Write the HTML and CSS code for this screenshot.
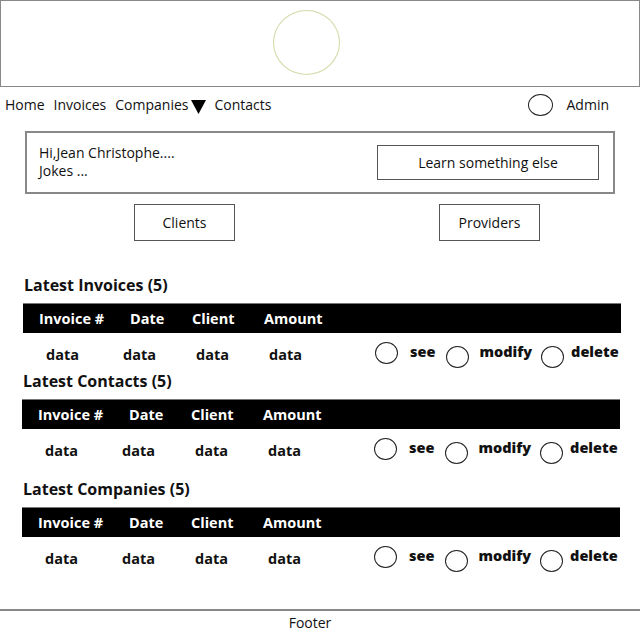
FILE: index.html
```html
<!DOCTYPE html>
<html lang="en">
<head>
    <meta charset="UTF-8">
    <meta name="viewport" content="width=device-width, initial-scale=1.0">
    <title>Dashboard</title>
    <link rel="stylesheet" href="styles.css">
</head>
<body>
    <header class="top">
        <div class="logo"></div>
    </header>

    <nav class="menu">
        <div class="links">
            <a href="#">Home</a>
            <a href="#">Invoices</a>
            <a href="#" class="dropdown">Companies
                <svg width="15" height="14" viewBox="0 0 15 14"><polygon points="0,0 15,0 7.5,14" fill="#000"/></svg>
            </a>
            <a href="#">Contacts</a>
        </div>
        <div class="user">
            <span class="avatar"></span>
            <span>Admin</span>
        </div>
    </nav>

    <div class="welcome">
        <p>Hi,Jean Christophe....<br>Jokes ...</p>
        <button class="box-btn wide">Learn something else</button>
    </div>

    <div class="choices">
        <button class="box-btn">Clients</button>
        <button class="box-btn">Providers</button>
    </div>

    <section class="latest first">
        <h2>Latest Invoices (5)</h2>
        <div class="head"><span>Invoice #</span><span>Date</span><span>Client</span><span>Amount</span></div>
        <div class="row">
            <span>data</span><span>data</span><span>data</span><span>data</span>
            <div class="actions">
                <i class="dot"></i><b>see</b><i class="dot low"></i><b>modify</b><i class="dot low end"></i><b>delete</b>
            </div>
        </div>
    </section>

    <section class="latest">
        <h2>Latest Contacts (5)</h2>
        <div class="head"><span>Invoice #</span><span>Date</span><span>Client</span><span>Amount</span></div>
        <div class="row">
            <span>data</span><span>data</span><span>data</span><span>data</span>
            <div class="actions">
                <i class="dot"></i><b>see</b><i class="dot low"></i><b>modify</b><i class="dot low end"></i><b>delete</b>
            </div>
        </div>
    </section>

    <section class="latest last">
        <h2>Latest Companies (5)</h2>
        <div class="head"><span>Invoice #</span><span>Date</span><span>Client</span><span>Amount</span></div>
        <div class="row">
            <span>data</span><span>data</span><span>data</span><span>data</span>
            <div class="actions">
                <i class="dot"></i><b>see</b><i class="dot low"></i><b>modify</b><i class="dot low end"></i><b>delete</b>
            </div>
        </div>
    </section>

    <footer class="bottom">Footer</footer>
</body>
</html>
```

FILE: styles.css
```css
body {
    font-family: 'Open Sans', 'Liberation Sans', sans-serif;
    font-size: 14px;
    color: #111;
    background-color: #fff;
    margin: 0;
    width: 640px;
    height: 640px;
    position: relative;
    overflow: hidden;
}

.top {
    box-sizing: border-box;
    height: 87px;
    border: 1px solid #888;
    display: flex;
    justify-content: center;
    align-items: center;
    padding-right: 28px;
}

.logo {
    width: 65px;
    height: 63px;
    border: 1px solid #d4d8a6;
    border-radius: 50%;
    margin-top: -2px;
}

.menu {
    height: 38px;
    display: flex;
    justify-content: space-between;
    align-items: center;
    padding: 0 31px 4px 5px;
    box-sizing: border-box;
}

.links {
    display: flex;
    align-items: center;
    gap: 9px;
}

.menu a {
    color: #111;
    text-decoration: none;
}

.dropdown {
    display: flex;
    align-items: center;
    gap: 3px;
}

.dropdown svg {
    margin-top: 5px;
    margin-right: -1px;
}

.user {
    display: flex;
    align-items: center;
    gap: 14px;
}

.avatar {
    box-sizing: border-box;
    width: 25px;
    height: 22px;
    border: 1.5px solid #222;
    border-radius: 50%;
    margin-top: 2px;
}

.welcome {
    box-sizing: border-box;
    margin: 6px 25px 0;
    height: 63px;
    border: 2px solid #888;
    display: flex;
    justify-content: space-between;
    align-items: center;
    padding: 0 14px 0 12px;
}

.welcome p {
    margin: 0;
    line-height: 18px;
    margin-top: -1px;
}

.box-btn {
    font-family: inherit;
    font-size: 14px;
    color: #111;
    background-color: #fff;
    border: 1.5px solid #555;
    border-radius: 0;
    width: 101px;
    height: 37px;
    padding: 0;
}

.box-btn.wide {
    width: 222px;
    height: 35px;
}

.choices {
    display: flex;
    gap: 204px;
    padding-left: 134px;
    margin-top: 10px;
}

.latest {
    margin: 0 20px 0 22px;
}

.latest.first {
    margin-top: 33px;
    margin-left: 23px;
    margin-right: 19px;
}

.latest.last {
    margin-top: 12px;
}

.latest h2 {
    font-size: 16px;
    font-weight: bold;
    margin: 0 0 7px 1px;
    line-height: 22px;
}

.head {
    background-color: #000;
    color: #fff;
    font-weight: bold;
    font-size: 14.5px;
    height: 29px;
    display: flex;
    align-items: center;
    padding-left: 16px;
    border-top: 1px solid #777;
}

.head span:nth-child(1) { width: 91px; }
.head span:nth-child(2) { width: 62px; }
.head span:nth-child(3) { width: 72px; }

.row {
    display: flex;
    align-items: flex-start;
    height: 37px;
    padding-left: 23px;
    font-weight: bold;
    font-size: 14.5px;
    line-height: 20px;
}

.row span {
    width: 77px;
    margin-top: 12px;
}

.row span:nth-child(2),
.row span:nth-child(3) { width: 73px; }

.row span:nth-child(4) { width: 107px; }

.actions {
    display: flex;
    align-items: flex-start;
    margin-top: 9px;
}

.dot {
    box-sizing: border-box;
    width: 23px;
    height: 22px;
    border: 1.5px solid #222;
    border-radius: 50%;
    margin: 0 12px 0 -1px;
}

.dot.low {
    margin: 4px 10px 0 11px;
}

.dot.low.end {
    margin: 4px 7px 0 9px;
}

.bottom {
    position: absolute;
    left: 0;
    right: 0;
    bottom: 0;
    height: 29px;
    border-top: 2px solid #888;
    text-align: center;
    padding-right: 20px;
    line-height: 24px;
}
```
